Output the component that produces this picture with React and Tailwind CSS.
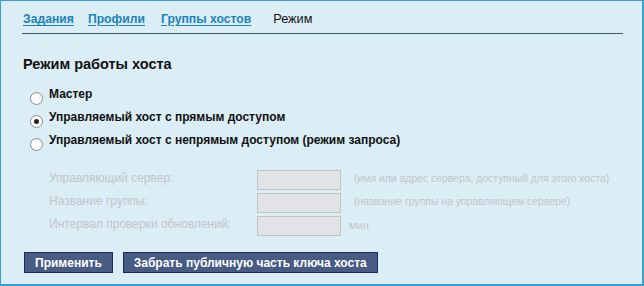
import { useState } from "react";

const tabs = [
  { label: "Задания", link: true, cls: "mr-[14px]" },
  { label: "Профили", link: true, cls: "mr-[16px]" },
  { label: "Группы хостов", link: true, cls: "mr-[22px]" },
  { label: "Режим", link: false, cls: "" },
];

const modes = [
  "Мастер",
  "Управляемый хост с прямым доступом",
  "Управляемый хост с непрямым доступом (режим запроса)",
];

const fields = [
  { label: "Управляющий сервер:", hint: "(имя или адрес сервера, доступный для этого хоста)" },
  { label: "Название группы:", hint: "(название группы на управляющем сервере)" },
  { label: "Интервал проверки обновлений:", hint: "мин", unit: true },
];

const Radio = ({ checked }) => (
  <span className="w-[13px] h-[13px] rounded-full border border-[#8a8a8a] bg-white flex items-center justify-center shrink-0">
    {checked && <span className="w-[5px] h-[5px] rounded-full bg-[#222]" />}
  </span>
);

const App = () => {
  const [mode, setMode] = useState(1);

  return (
    <div
      className="w-[644px] h-[286px] bg-[#dbedf5] border border-[#3d9fd1] border-r-2 border-b-2 text-[#111]"
      style={{ fontFamily: '"Liberation Sans", Arial, sans-serif' }}
    >
      {/* TABS */}
      <div className="ml-[21px] mr-[19px] pt-[10px] h-[33px] border-b border-[#3e5b6c] flex items-start">
        {tabs.map((t) => (
          <span
            key={t.label}
            className={
              t.link
                ? `font-bold text-[12.2px] leading-[16px] text-[#1d83bd] underline underline-offset-2 ${t.cls} first:ml-[1px]`
                : "text-[12.7px] leading-[16px] text-[#111]"
            }
          >
            {t.label}
          </span>
        ))}
      </div>

      <div className="pl-[22px]">
        {/* TITLE */}
        <h2 className="mt-[21px] text-[14.5px] leading-[18px] font-bold">
          Режим работы хоста
        </h2>

        {/* MODES */}
        <div className="mt-[15px] pl-[7px] flex flex-col gap-[9px]">
          {modes.map((m, i) => (
            <label
              key={m}
              onClick={() => setMode(i)}
              className="flex items-center gap-[6px] h-[14px] cursor-pointer"
            >
              <span className="mt-[6px]">
                <Radio checked={mode === i} />
              </span>
              <span className="text-[12px] font-bold leading-[14px] -mt-[3px]">{m}</span>
            </label>
          ))}
        </div>

        {/* DISABLED FIELDS */}
        <div className="mt-[22px] pl-[26px] flex flex-col gap-[3px] text-[#c2c6ca]">
          {fields.map((f) => (
            <div key={f.label} className="flex items-center h-[20px]">
              <span className="w-[208px] text-[12px] -mt-[4px]">{f.label}</span>
              <span className="w-[84px] h-[20px] bg-[#e1e3e7] border border-[#c3c3c3]" />
              <span
                className={
                  f.unit
                    ? "ml-[8px] text-[11px] -mt-[2px]"
                    : "ml-[13px] text-[10.4px] -mt-[2px]"
                }
              >
                {f.hint}
              </span>
            </div>
          ))}
        </div>

        {/* BUTTONS */}
        <div className="mt-[16px] flex gap-[10px] pl-[1px]">
          <button className="h-[21px] px-[10px] bg-[#475b83] border border-[#1b2a6a] text-white text-[12px] font-bold leading-[18px]">
            Применить
          </button>
          <button className="h-[21px] px-[10px] bg-[#475b83] border border-[#1b2a6a] text-white text-[12px] font-bold leading-[18px]">
            Забрать публичную часть ключа хоста
          </button>
        </div>
      </div>
    </div>
  );
};

export default App;
